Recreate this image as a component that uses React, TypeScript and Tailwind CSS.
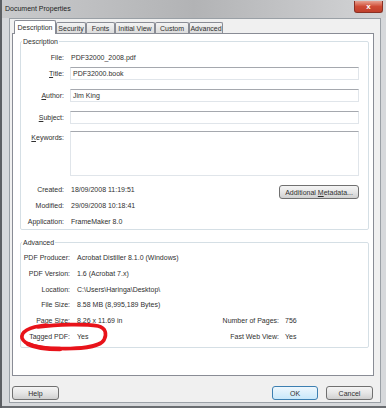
import type { ReactNode } from "react";

const font = "font-['Liberation_Sans',Arial,sans-serif]";
const btn =
  "h-[14px] flex items-center justify-center rounded-[3px] border border-[#707070] bg-linear-to-b from-[#f4f4f4] via-[#e6e6e6] to-[#d0d0d0]";

function U({ children }: { children: ReactNode }) {
  return <span className="underline underline-offset-[1px]">{children}</span>;
}

function Tab({ label, w, active }: { label: string; w: string; active?: boolean }) {
  if (active)
    return (
      <div className={`${w} relative z-10 -mb-px h-[14px] flex items-center justify-center bg-white border border-b-0 border-[#898c95] rounded-t-[2px]`}>
        {label}
      </div>
    );
  return (
    <div className={`${w} h-[11px] flex items-center justify-center bg-linear-to-b from-[#f3f3f3] to-[#dcdcdc] border border-b-0 border-[#898c95] rounded-t-[2px]`}>
      {label}
    </div>
  );
}

function Field({ label, children, h = "h-[13px]", top = false }: { label: ReactNode; children: ReactNode; h?: string; top?: boolean }) {
  return (
    <div className={`flex ${top ? "items-start" : "items-center"} ${h}`}>
      <div className={`w-[43px] text-right ${top ? "mt-[3px]" : ""}`}>{label}</div>
      <div className="ml-[6px] flex-1 h-full">{children}</div>
    </div>
  );
}

function Input({ value, h = "h-[13px]" }: { value?: string; h?: string }) {
  return (
    <div className={`${h} flex items-center pl-[2px] bg-white border border-[#e0e5ea] border-t-[#a5a8ae]`}>
      {value}
    </div>
  );
}

function Info({ label, value, w = "w-[43px]", gap = "ml-[7px]", h = "h-[16px]" }: { label: string; value: string; w?: string; gap?: string; h?: string }) {
  return (
    <div className={`flex items-center ${h}`}>
      <div className={`${w} text-right`}>{label}</div>
      <div className={gap}>{value}</div>
    </div>
  );
}

function AdvRow({ label, value, rLabel, rValue }: { label: string; value: string; rLabel?: string; rValue?: string }) {
  return (
    <div className="flex items-center h-[15.7px]">
      <div className="w-[190px] flex">
        <div className="w-[49px] text-right">{label}</div>
        <div className="ml-[7px]">{value}</div>
      </div>
      {rLabel && (
        <>
          <div className="w-[68px] text-right">{rLabel}</div>
          <div className="ml-[6px]">{rValue}</div>
        </>
      )}
    </div>
  );
}

export default function App() {
  return (
    <div className={`relative w-[386px] h-[408px] overflow-hidden flex flex-col bg-[#d6d8db] border-l-2 border-l-[#5c5f63] ${font} text-[7px] leading-none text-[#303030]`}>
      <div className="h-[18px] shrink-0 flex items-start bg-linear-to-r from-[#c9cacc] via-[#b2b3b5] to-[#d4d5d7]">
        <span className="mt-[5px] ml-[3px] text-[#1c1c1c]">Document Properties</span>
        <div className="ml-auto mr-[3px] mt-[1px] w-[29px] h-[12px] rounded-b-[3px] border border-t-0 border-[#8a3024] bg-linear-to-b from-[#e6a090] via-[#cf4b35] to-[#c0402c] flex items-center justify-center text-white text-[8px] font-bold">
          x
        </div>
      </div>

      <div className="flex-1 flex pl-[7px] pr-[5px] pb-[3px] border-b-2 border-[#6a6d71]">
        <div className="flex-1 flex flex-col bg-[#f0f0f0] border border-[#9aa0a6] pl-[2px] pr-[6px] pt-[1px]">
          <div className="h-[13px] flex items-end pl-[2px]">
            <Tab label="Description" w="w-[42px]" active />
            <Tab label="Security" w="w-[30px]" />
            <Tab label="Fonts" w="w-[29px]" />
            <Tab label="Initial View" w="w-[40px]" />
            <Tab label="Custom" w="w-[34px]" />
            <Tab label="Advanced" w="w-[34px]" />
          </div>

          <div className="h-[343px] shrink-0 bg-white border border-[#898c95] pl-[7px] pr-[4px] pt-[3px]">
            <fieldset className="border border-[#d5dfe5] rounded-[2px] pr-[9px] pb-0">
              <legend className="ml-[1px] px-[1px] leading-[9px]">Description</legend>
              <div className="pt-[5px]">
                <Field label="File:">
                  <div className="h-full flex items-center pl-[1px]">PDF32000_2008.pdf</div>
                </Field>
                <div className="mt-[3px]">
                  <Field label={<><U>T</U>itle:</>}>
                    <Input value="PDF32000.book" />
                  </Field>
                </div>
                <div className="mt-[9px]">
                  <Field label={<><U>A</U>uthor:</>}>
                    <Input value="Jim King" />
                  </Field>
                </div>
                <div className="mt-[9px]">
                  <Field label={<><U>S</U>ubject:</>}>
                    <Input />
                  </Field>
                </div>
                <div className="mt-[7px]">
                  <Field label={<><U>K</U>eywords:</>} h="h-[45px]" top>
                    <Input h="h-[45px]" />
                  </Field>
                </div>
                <div className="mt-[5px] flex">
                  <div className="flex-1">
                    <Info label="Created:" value="18/09/2008 11:19:51" />
                    <Info label="Modified:" value="29/09/2008 10:18:41" />
                    <Info label="Application:" value="FrameMaker 8.0" />
                  </div>
                  <div className={`${btn} mt-[4px] w-[80px] h-[13px]`}>
                    Additional&nbsp;<U>M</U>etadata...
                  </div>
                </div>
              </div>
            </fieldset>

            <fieldset className="mt-[8px] border border-[#d5dfe5] rounded-[2px] pb-[3px]">
              <legend className="ml-[1px] px-[1px] leading-[9px]">Advanced</legend>
              <div className="pt-[3px]">
                <AdvRow label="PDF Producer:" value="Acrobat Distiller 8.1.0 (Windows)" />
                <AdvRow label="PDF Version:" value="1.6 (Acrobat 7.x)" />
                <AdvRow label="Location:" value="C:\Users\Haringa\Desktop\" />
                <AdvRow label="File Size:" value="8.58 MB (8,995,189 Bytes)" />
                <AdvRow label="Page Size:" value="8.26 x 11.69 in" rLabel="Number of Pages:" rValue="756" />
                <AdvRow label="Tagged PDF:" value="Yes" rLabel="Fast Web View:" rValue="Yes" />
              </div>
            </fieldset>
          </div>

          <div className="mt-[10px] flex">
            <div className={`${btn} w-[47px]`}>Help</div>
            <div className="ml-auto w-[46px] h-[14px] flex items-center justify-center rounded-[3px] border border-[#3c7fb1] bg-linear-to-b from-[#eef7fd] to-[#c9e8fa]">
              OK
            </div>
            <div className={`${btn} ml-[8px] mr-[1px] w-[47px]`}>Cancel</div>
          </div>
        </div>
      </div>

      <svg className="absolute left-[14px] top-[321px]" width="94" height="32" viewBox="0 0 94 32">
        <path
          d="M22 6 C42 3 70 3 82 5 C90 7 91 13 88 19 C84 26 62 28 42 27.5 C24 27.5 8 24 6 17 C5 11 12 6 30 4"
          fill="none"
          stroke="#e8131a"
          strokeWidth="3.6"
          strokeLinecap="round"
        />
        <path d="M12 23 C20 27 30 28 44 28" fill="none" stroke="#e8131a" strokeWidth="4.5" strokeLinecap="round" />
      </svg>
    </div>
  );
}
